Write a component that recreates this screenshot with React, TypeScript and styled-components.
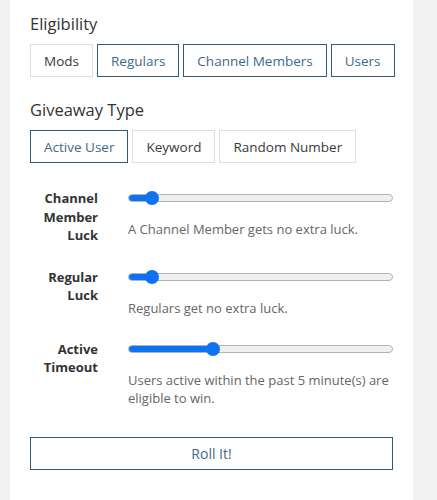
import React, { useState } from "react";
import styled, { createGlobalStyle, css } from "styled-components";

const GlobalStyle = createGlobalStyle`
  html, body {
    margin: 0;
    padding: 0;
    background: #f2f2f2;
  }
  body {
    font-family: "Open Sans", "Noto Sans", Arial, sans-serif;
    color: #333;
  }
`;

const Panel = styled.div`
  box-sizing: border-box;
  width: 403px;
  min-height: 500px;
  margin-left: 10px;
  background: #ffffff;
  padding: 12px 20px 30px 20px;
  display: flex;
  flex-direction: column;
`;

const Heading = styled.h3`
  margin: 0 0 8px 0;
  font-size: 16.5px;
  line-height: 24px;
  font-weight: 400;
  color: #333;
`;

const Section = styled.section<{ $top?: number }>`
  margin-top: ${(p) => p.$top ?? 0}px;
`;

const ButtonGroup = styled.div`
  display: flex;
  gap: 4px;
`;

const ToggleButton = styled.button<{ $active?: boolean }>`
  box-sizing: border-box;
  flex-shrink: 0;
  white-space: nowrap;
  height: 33px;
  padding: 0 13px;
  font-family: "Open Sans", "Noto Sans", Arial, sans-serif;
  font-size: 13.5px;
  background: #fff;
  cursor: pointer;
  ${(p) =>
    p.$active
      ? css`
          border: 1px solid #2f5b77;
          color: #41698a;
        `
      : css`
          border: 1px solid #dedede;
          color: #3a3a3a;
        `}
`;

const Sliders = styled.div`
  margin-top: 26px;
  display: flex;
  flex-direction: column;
  gap: 23px;
`;

const SliderRow = styled.div`
  display: grid;
  grid-template-columns: 68px 1fr;
  column-gap: 30px;
  align-items: start;
`;

const Label = styled.div`
  text-align: right;
  font-weight: 700;
  font-size: 13px;
  line-height: 18.5px;
  color: #333;
`;

const Control = styled.div`
  display: flex;
  flex-direction: column;
`;

const Range = styled.input`
  -webkit-appearance: none;
  appearance: none;
  display: block;
  width: 100%;
  margin: 0;
  height: 18px;
  background: transparent;
  cursor: pointer;

  &::-webkit-slider-runnable-track {
    height: 8px;
    box-sizing: border-box;
    border-radius: 4px;
    border: 1px solid #b3b3b3;
    background: linear-gradient(
      to right,
      #0d72f2 0,
      #0d72f2 var(--fill),
      #efefef var(--fill),
      #efefef 100%
    );
  }
  &::-webkit-slider-thumb {
    -webkit-appearance: none;
    appearance: none;
    width: 14px;
    height: 14px;
    margin-top: -4px;
    border-radius: 50%;
    background: #0d72f2;
    border: none;
  }
`;

const Description = styled.p`
  margin: 13px 0 0 0;
  font-size: 13px;
  line-height: 18px;
  color: #666;
`;

const RollButton = styled.button`
  margin-top: 30px;
  box-sizing: border-box;
  width: 100%;
  height: 33px;
  background: #fff;
  border: 1.5px solid #2f5b77;
  color: #41698a;
  font-family: "Open Sans", "Noto Sans", Arial, sans-serif;
  font-size: 14px;
  cursor: pointer;
`;

type SliderProps = {
  label: string[];
  min: number;
  max: number;
  value: number;
  description: string;
};

function LabeledSlider({ label, min, max, value, description }: SliderProps) {
  const [v, setV] = useState(value);
  const pct = ((v - min) / (max - min)) * 100;
  const fill = `calc(7px + (100% - 14px) * ${pct / 100})`;
  return (
    <SliderRow>
      <Label>
        {label.map((l) => (
          <div key={l}>{l}</div>
        ))}
      </Label>
      <Control>
        <Range
          type="range"
          min={min}
          max={max}
          value={v}
          onChange={(e) => setV(Number(e.target.value))}
          style={{ ["--fill" as any]: fill }}
        />
        <Description>{description}</Description>
      </Control>
    </SliderRow>
  );
}

export default function App() {
  return (
    <>
      <GlobalStyle />
      <Panel>
        <Section>
          <Heading>Eligibility</Heading>
          <ButtonGroup>
            <ToggleButton>Mods</ToggleButton>
            <ToggleButton $active>Regulars</ToggleButton>
            <ToggleButton $active>Channel Members</ToggleButton>
            <ToggleButton $active>Users</ToggleButton>
          </ButtonGroup>
        </Section>
        <Section $top={21}>
          <Heading>Giveaway Type</Heading>
          <ButtonGroup>
            <ToggleButton $active>Active User</ToggleButton>
            <ToggleButton>Keyword</ToggleButton>
            <ToggleButton>Random Number</ToggleButton>
          </ButtonGroup>
        </Section>
        <Sliders>
          <LabeledSlider
            label={["Channel", "Member", "Luck"]}
            min={0}
            max={16}
            value={1}
            description="A Channel Member gets no extra luck."
          />
          <LabeledSlider
            label={["Regular", "Luck"]}
            min={0}
            max={16}
            value={1}
            description="Regulars get no extra luck."
          />
          <LabeledSlider
            label={["Active", "Timeout"]}
            min={1}
            max={14}
            value={5}
            description="Users active within the past 5 minute(s) are eligible to win."
          />
        </Sliders>
        <RollButton>Roll It!</RollButton>
      </Panel>
    </>
  );
}
